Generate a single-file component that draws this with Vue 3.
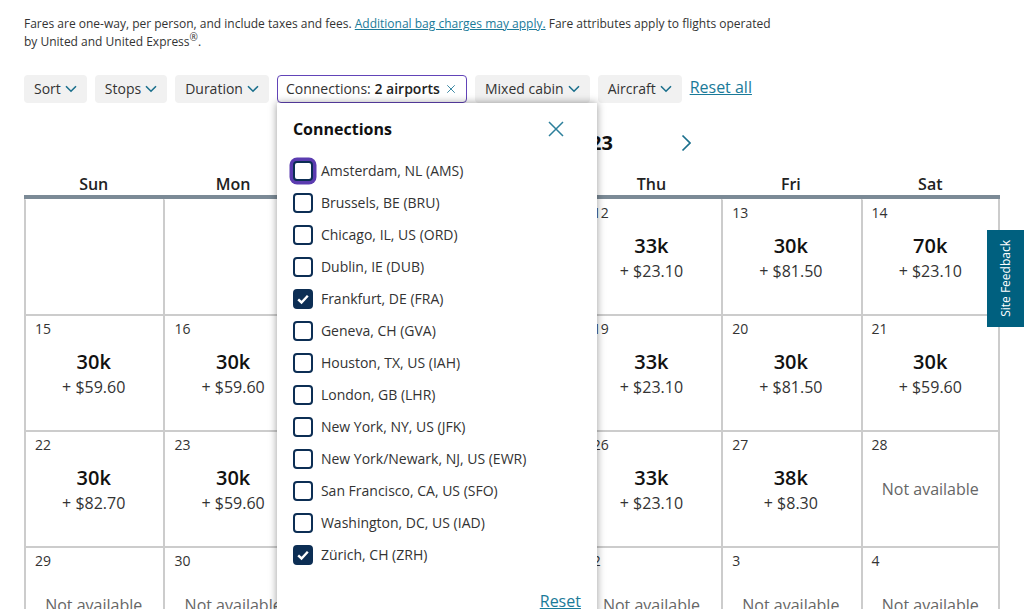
<script setup>
const chips = ['Sort', 'Stops', 'Duration']
const chipsAfter = ['Mixed cabin', 'Aircraft']
const days = ['Sun', 'Mon', 'Tue', 'Wed', 'Thu', 'Fri', 'Sat']

const airports = [
  { name: 'Amsterdam, NL (AMS)', focus: true },
  { name: 'Brussels, BE (BRU)' },
  { name: 'Chicago, IL, US (ORD)' },
  { name: 'Dublin, IE (DUB)' },
  { name: 'Frankfurt, DE (FRA)', checked: true },
  { name: 'Geneva, CH (GVA)' },
  { name: 'Houston, TX, US (IAH)' },
  { name: 'London, GB (LHR)' },
  { name: 'New York, NY, US (JFK)' },
  { name: 'New York/Newark, NJ, US (EWR)' },
  { name: 'San Francisco, CA, US (SFO)' },
  { name: 'Washington, DC, US (IAD)' },
  { name: 'Zürich, CH (ZRH)', checked: true }
]

const cells = [
  {}, {}, {}, {},
  { d: 12, m: '33k', p: '$23.10' }, { d: 13, m: '30k', p: '$81.50' }, { d: 14, m: '70k', p: '$23.10' },
  { d: 15, m: '30k', p: '$59.60' }, { d: 16, m: '30k', p: '$59.60' }, { d: 17, m: '30k', p: '$59.60' }, { d: 18, m: '30k', p: '$59.60' },
  { d: 19, m: '33k', p: '$23.10' }, { d: 20, m: '30k', p: '$81.50' }, { d: 21, m: '30k', p: '$59.60' },
  { d: 22, m: '30k', p: '$82.70' }, { d: 23, m: '30k', p: '$59.60' }, { d: 24, m: '30k', p: '$59.60' }, { d: 25, m: '30k', p: '$59.60' },
  { d: 26, m: '33k', p: '$23.10' }, { d: 27, m: '38k', p: '$8.30' }, { d: 28 },
  { d: 29 }, { d: 30 }, { d: 31 }, { d: 1 }, { d: 2 }, { d: 3 }, { d: 4 }
]
</script>

<template>
  <div class="page">
    <p class="intro">
      Fares are one-way, per person, and include taxes and fees.
      <a class="link" href="#">Additional bag charges may apply.</a>
      Fare attributes apply to flights operated<br />
      by United and United Express<sup>®</sup>.
    </p>

    <div class="filters">
      <button v-for="c in chips" :key="c" class="chip">
        <span class="lift">{{ c }}</span>
        <svg class="chev" viewBox="0 0 12 8"><path d="M1 1.2l5 5 5-5" /></svg>
      </button>
      <div class="chip-wrap">
        <button class="chip active">
          <span class="lift">Connections: <b>2 airports</b></span>
          <svg class="clear" viewBox="0 0 12 12"><path d="M1.5 1.5l9 9M10.5 1.5l-9 9" /></svg>
        </button>
        <div class="popup">
          <div class="popup-head">
            <span class="popup-title">Connections</span>
            <svg class="close" viewBox="0 0 18 18"><path d="M2 2l14 14M16 2L2 16" /></svg>
          </div>
          <ul class="airports">
            <li v-for="a in airports" :key="a.name" class="airport">
              <span class="box" :class="{ checked: a.checked, focus: a.focus }">
                <svg v-if="a.checked" viewBox="0 0 12 12"><path d="M2.4 6.2l2.5 2.4 4.7-5" /></svg>
              </span>
              <span class="lift">{{ a.name }}</span>
            </li>
          </ul>
          <div class="popup-foot"><a class="link" href="#">Reset</a></div>
        </div>
      </div>
      <button v-for="c in chipsAfter" :key="c" class="chip">
        <span class="lift">{{ c }}</span>
        <svg class="chev" viewBox="0 0 12 8"><path d="M1 1.2l5 5 5-5" /></svg>
      </button>
      <a class="link reset-all" href="#">Reset all</a>
    </div>

    <div class="month">
      <span class="month-name">October 2023</span>
      <svg class="next" viewBox="0 0 10 18"><path d="M1.5 1.5L9 9l-7.5 7.5" /></svg>
    </div>

    <div class="weekdays">
      <div v-for="d in days" :key="d">{{ d }}</div>
    </div>
    <div class="grid">
      <div v-for="(c, i) in cells" :key="i" class="cell">
        <div class="date">{{ c.d }}</div>
        <template v-if="c.m">
          <div class="miles">{{ c.m }}</div>
          <div class="price">+ {{ c.p }}</div>
        </template>
        <div v-else-if="c.d" class="na">Not available</div>
      </div>
    </div>

    <div class="feedback"><span>Site Feedback</span></div>
  </div>
</template>

<style>
html, body {
  margin: 0;
  overflow: hidden;
}
</style>

<style scoped>
.page {
  position: relative;
  height: 609px;
  overflow: hidden;
  padding: 15px 24px 0;
  box-sizing: border-box;
  font-family: "Open Sans", sans-serif;
  color: #333;
  background: #fff;
}

.intro {
  margin: 0;
  font-size: 12px;
  line-height: 18px;
}

.intro sup {
  font-size: 10px;
  line-height: 0;
}

.link {
  color: #1a7a99;
  text-decoration: underline;
}

.lift {
  padding-bottom: 2px;
}

.filters {
  display: flex;
  align-items: flex-start;
  gap: 8px;
  margin-top: 24px;
}

.chip {
  display: flex;
  align-items: center;
  gap: 4px;
  height: 28px;
  padding: 0 10px;
  border: 0;
  border-radius: 4px;
  background: #f1f1f1;
  font: 14px "Open Sans", sans-serif;
  color: #333;
  white-space: nowrap;
}

.chip-wrap {
  position: relative;
}

.chip.active {
  width: 190px;
  gap: 6px;
  padding: 0 8px;
  background: #fff;
  border: 1px solid #6244b8;
  box-sizing: border-box;
}

.chip.active b {
  font-weight: 600;
  color: #222;
}

.chev {
  width: 12px;
  height: 8px;
  fill: none;
  stroke: #1a6f8c;
  stroke-width: 1.6;
}

.clear {
  width: 10px;
  height: 10px;
  fill: none;
  stroke: #3f8aa5;
  stroke-width: 1.2;
}

.reset-all {
  font-size: 16px;
  line-height: 24px;
}

.popup {
  position: absolute;
  z-index: 5;
  top: 28px;
  left: 0;
  width: 320px;
  height: 520px;
  padding: 0 16px;
  box-sizing: border-box;
  background: #fff;
  box-shadow: 0 0 8px rgba(0, 0, 0, 0.4);
}

.popup-head {
  display: flex;
  justify-content: space-between;
  align-items: center;
  padding: 14px 16px 0 0;
  height: 24px;
}

.popup-title {
  font-size: 16px;
  font-weight: 700;
  color: #111;
}

.close {
  width: 18px;
  height: 18px;
  fill: none;
  stroke: #2c7f9b;
  stroke-width: 1.5;
}

.airports {
  list-style: none;
  margin: 14px 0 0;
  padding: 0;
}

.airport {
  display: flex;
  align-items: center;
  gap: 8px;
  height: 32px;
  font-size: 14px;
}

.box {
  display: flex;
  width: 20px;
  height: 20px;
  box-sizing: border-box;
  border: 2px solid #0c2e54;
  border-radius: 4px;
  background: #fff;
}

.box.checked {
  background: #0c2e54;
}

.box.focus {
  box-shadow: 0 0 0 3.5px #5b3cb0;
}

.box svg {
  width: 16px;
  height: 16px;
  fill: none;
  stroke: #fff;
  stroke-width: 1.8;
}

.popup-foot {
  margin-top: 19px;
  text-align: right;
  font-size: 16px;
}

.month {
  display: flex;
  align-items: center;
  height: 30px;
  margin-top: 25px;
  padding-left: 411px;
}

.month-name {
  width: 178px;
  padding-bottom: 2px;
  text-align: right;
  font-size: 20px;
  font-weight: 700;
  color: #111;
}

.next {
  width: 10px;
  height: 18px;
  margin-left: 68px;
  fill: none;
  stroke: #1a6f8c;
  stroke-width: 1.7;
}

.weekdays {
  position: relative;
  z-index: 1;
  display: grid;
  grid-template-columns: repeat(7, 1fr);
  margin-top: 15px;
  height: 22px;
  border-bottom: 4px solid #7b8a96;
  text-align: center;
  font-size: 16px;
  font-weight: 600;
  line-height: 22px;
  color: #222;
}

.grid {
  display: grid;
  grid-template-columns: repeat(7, 1fr);
  grid-auto-rows: 116px;
  margin-top: -1px;
  box-shadow: inset -2px 0 #ccc;
}

.cell {
  border-left: 2px solid #ccc;
  border-top: 2px solid #ccc;
  text-align: center;
  padding: 3px 2px 0 0;
}

.cell:nth-child(-n+7) {
  border-top-color: transparent;
}

.date {
  height: 19px;
  padding-left: 9px;
  text-align: left;
  font-size: 14px;
  line-height: 19px;
}

.miles {
  margin-top: 10px;
  font-size: 20px;
  font-weight: 600;
  line-height: 28px;
  color: #111;
}

.price {
  font-size: 16px;
  line-height: 22px;
}

.na {
  margin-top: 24px;
  font-size: 16px;
  line-height: 22px;
  color: #666;
}

.feedback {
  position: absolute;
  z-index: 4;
  top: 230px;
  right: 0;
  display: flex;
  align-items: center;
  justify-content: center;
  width: 37px;
  height: 97px;
  background: #00607f;
  color: #fff;
  font-size: 12px;
}

.feedback span {
  writing-mode: vertical-rl;
  transform: rotate(180deg);
  white-space: nowrap;
}
</style>
